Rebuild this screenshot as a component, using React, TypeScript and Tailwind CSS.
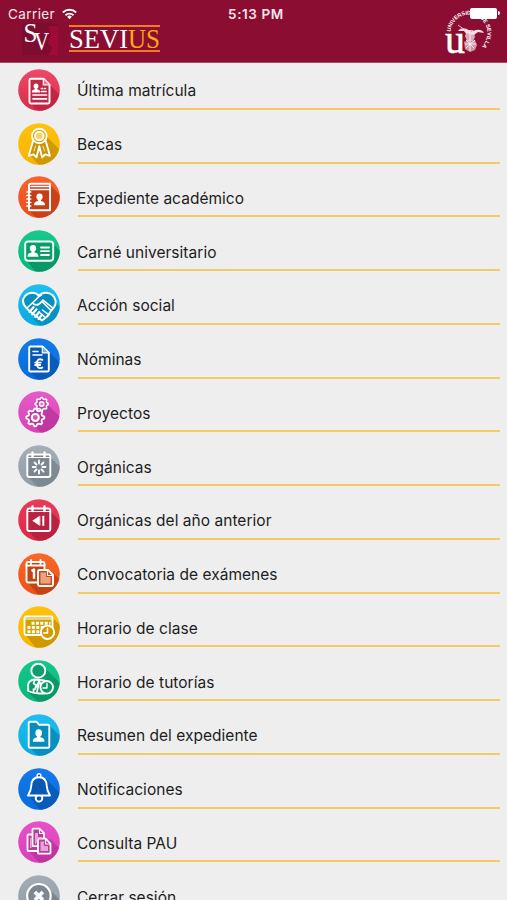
import React from 'react';

type Glyph = { from: string; to: string; shade: string; fold: string; art: React.ReactNode };

const gear = (cx: number, cy: number, r: number, depth: number): string => {
  const pts: string[] = [];
  for (let i = 0; i < 32; i++) {
    const a = ((i - 0.5) / 32) * Math.PI * 2;
    const q = i % 4 < 2 ? r : r - depth;
    pts.push(`${(cx + q * Math.cos(a)).toFixed(2)},${(cy + q * Math.sin(a)).toFixed(2)}`);
  }
  return pts.join(' ');
};

const Person = ({ x, y, s = 1 }: { x: number; y: number; s?: number }) => (
  <g transform={`translate(${x} ${y}) scale(${s})`} fill="#fff" stroke="none">
    <ellipse cx="0" cy="-3" rx="3.2" ry="3.5" />
    <path d="M-1.500-1h3v2.300c2.500.6 4.100 1.300 4.100 4.200h-11.200c0-2.900 1.600-3.600 4.100-4.200z" />
  </g>
);

const Calendar = ({ dark }: { dark: string }) => (
  <>
    <rect x="9.300" y="9.500" width="23" height="22.500" rx="2" fill={dark} />
    <path d="M14.500 7.500v4.500M26.500 7.500v4.500" strokeWidth="2.400" />
    <path d="M9.500 12.500h22.500" strokeWidth="1" />
  </>
);

const glyphs: Record<string, Glyph> = {
  enrol: {
    from: '#ef4967', to: '#d82c4d', fold: '#b92140', shade: 'M32 16 50 34V50H28L12 34z',
    art: (
      <>
        <path d="M13 9.700h12.500l6 6V33q0 1.500-1.500 1.500H13q-1.500 0-1.500-1.500V11.200q0-1.500 1.500-1.500z" fill="#c32746" />
        <path d="M25.300 10v6h6" fill="#f57b91" strokeWidth="1.200" />
        <Person x={18} y={19.300} s={0.75} />
        <path d="M23.500 19.500h1.200M26.700 19.500h.8M23.500 22.500h4.500M15 26h13.500M15 29.800h13.500" strokeWidth="1.700" />
      </>
    ),
  },
  award: {
    from: '#ffc20e', to: '#f6b400', fold: '#c58d00', shade: 'M28 13 50 35V50H28L12 32z',
    art: (
      <>
        <path d="m15 18-4.300 14.800 4.800-1.500 3 3 2.800-11 2.800 11 3-3 4.800 1.500L27.700 18" fill="#c99400" />
        <circle cx="21.300" cy="13" r="7.300" fill="#d9a000" strokeWidth="1.900" />
        <circle cx="21.300" cy="13" r="4.300" fill="#f7d265" strokeWidth="1.900" />
        <path d="m17.500 23-1.500 5M25 23l1.500 5" strokeWidth=".8" />
      </>
    ),
  },
  record: {
    from: '#f8632e', to: '#ed4c1d', fold: '#bd3b16', shade: 'M32 9 50 27V50H28L10 34z',
    art: (
      <>
        <path d="M13 7.800h19v26.500H11V9.800q0-2 2-2z" fill="#c43e18" />
        <path d="M11 13.500h21M13 10.600h19" strokeWidth="1.500" />
        <path d="M8.800 16h4M8.800 19.500h4M8.800 23h4M8.800 26.500h4M8.800 30h4" strokeWidth="1.500" />
        <Person x={21.500} y={23.800} s={0.98} />
      </>
    ),
  },
  card: {
    from: '#17c98c', to: '#06b878', fold: '#088d60', shade: 'M34 13 50 29V50H25L8 30z',
    art: (
      <>
        <rect x="7.200" y="11.500" width="28" height="19.300" rx="3" fill="#099d6b" />
        <Person x={15} y={21.300} s={0.98} />
        <path d="M23 17.500h8M23 21.200h8M23 25h8" strokeWidth="1.800" />
      </>
    ),
  },
  hands: {
    from: '#21bdf1', to: '#08acdf', fold: '#0789b8', shade: 'M36 17 50 31V50H30L15 35z',
    art: (
      <>
        <path d="M21 12C18 8 11 7.500 7 12c-3.500 4.200-1.700 8.500 1 11.500l4 4 12 9 3.200-2.500 3-2.500 2-3.500 3.600-4.300c3.200-4 2.200-9.300-1.200-12.500C30.500 7.700 24 8 21 12z" fill="#078fbe" />
        <path d="m9 24 9-8.500q3-3.500 5.300-4.500M15.500 20q4.500 2.500 8.500-2.500l9 9M20 21l5-4.800 10 8" strokeWidth="1.700" />
        <path d="m11.500 28 4-4.800M14.300 30.300l4.200-5M17.300 33l4-5M20.500 35l3.500-4.200" strokeWidth="2.200" />
        <path d="m24.500 26 6 4.700M22.500 29.300l4.700 4.200" strokeWidth="1.500" />
      </>
    ),
  },
  payroll: {
    from: '#117bea', to: '#066bdb', fold: '#0756af', shade: 'M31 14 50 33V50H28L11 33z',
    art: (
      <>
        <path d="M12.500 8.500h12l6.300 6.200v17.500q0 1.300-1.300 1.300h-17q-1.300 0-1.300-1.300V9.800q0-1.300 1.300-1.300z" fill="#0758b2" />
        <path d="M24.300 8.700v6.200h6" fill="#72adf0" strokeWidth="1.200" />
        <path d="M15 13.500h5M15 17h9" strokeWidth="1.600" />
        <path d="M24.300 21.800c-3.800-1.500-5.500.4-5.500 3.900s1.800 5.300 5.500 3.900M17.200 24.600h5.500M17.200 27h5" strokeWidth="1.900" />
      </>
    ),
  },
  gears: {
    from: '#e65bc7', to: '#d744b6', fold: '#b83299', shade: 'M29 13 50 34V50H32L11 31z',
    art: (
      <>
        <polygon points={gear(23.700, 13, 6.500, 1.300)} fill="#c13ba3" strokeWidth="1.500" />
        <circle cx="23.700" cy="13" r="2.200" fill="#e86fcd" strokeWidth="1.500" />
        <polygon points={gear(17.300, 26.500, 9, 2)} fill="#bc369d" strokeWidth="1.800" />
        <circle cx="17.300" cy="26.500" r="3.500" fill="#d954bb" strokeWidth="2.100" />
      </>
    ),
  },
  calendar: {
    from: '#a4afb8', to: '#919ca5', fold: '#75818a', shade: 'M32 12 50 30V50H28L10 32z',
    art: (
      <>
        <Calendar dark="#7b8790" />
        <path d="M21 15.500v3M21 25.500v3M14.700 22h3M24.500 22h3M16.500 17.500l2 2M25.500 17.500l-2 2M16.500 26.500l2-2M25.500 26.500l-2-2" strokeWidth="1.800" />
      </>
    ),
  },
  previous: {
    from: '#e93b5a', to: '#dc2849', fold: '#af1e3c', shade: 'M32 12 50 30V50H28L10 32z',
    art: (
      <>
        <Calendar dark="#b92341" />
        <path d="m14.300 21.800 7-4.800v9.600z" fill="#fff" stroke="none" />
        <path d="M21.800 17v9.600" strokeWidth="1" strokeLinecap="butt" />
        <path d="M25.300 16.800v10" strokeWidth="2" strokeLinecap="butt" />
      </>
    ),
  },
  exams: {
    from: '#f96827', to: '#ee5015', fold: '#ba3e13', shade: 'M33 18 50 35V50H27L11 31z',
    art: (
      <>
        <rect x="8.500" y="9" width="18" height="20.500" rx="1.500" fill="#c34412" />
        <path d="M13 6.800v4.500M22.500 6.800v4.500M8.500 12.500h18" strokeWidth="1.800" />
        <path d="m13.500 18 2.500-1.500v9.200" strokeWidth="2.400" strokeLinecap="butt" />
        <path d="M21.500 17h8.500l5 5v9.500q0 1.500-1.500 1.500h-12q-1.500 0-1.500-1.500v-13q0-1.500 1.500-1.500z" fill="#c84a18" />
        <path d="M22.500 19.500h5.500v4.500h4.500v6.500h-10z" fill="#eda27f" stroke="none" />
        <path d="M29.500 17.300v5.200h5" strokeWidth="1.200" />
      </>
    ),
  },
  schedule: {
    from: '#ffc10b', to: '#f8b500', fold: '#c48e00', shade: 'M35 12 50 27V50H24L7 28z',
    art: (
      <>
        <rect x="6.500" y="10.500" width="28" height="18.500" rx="1.500" fill="#d6a000" />
        <path d="M7 13h27" strokeWidth="1.200" />
        <path d="M13.500 17.200h19M9.500 21.500h18M9.500 25.700h14" strokeWidth="3" strokeDasharray="3 1.400" strokeLinecap="butt" />
        <circle cx="29.500" cy="26.300" r="6.700" fill="#d29a00" strokeWidth="1.900" />
        <path d="M29.500 22.200V27h-4" strokeWidth="1.500" />
      </>
    ),
  },
  tutor: {
    from: '#14c78a', to: '#09b97b', fold: '#098d62', shade: 'M27 8 50 31V50H28L10 32z',
    art: (
      <>
        <circle cx="20.300" cy="10.700" r="7" fill="#0b9d6b" />
        <path d="M16.500 19.500c-4 .8-6 2.500-6.300 5v6.500q4.500 2.300 11 2.500h5v-13z" fill="#0b9967" />
        <path d="m17 20-1.500 3.500 2.500 1.500-1 4.500 4-8.500 4 7M15.500 29v2.500M21 23l-2 9" strokeWidth="1.700" />
        <circle cx="28.700" cy="27.300" r="6.300" fill="#0b9c6b" strokeWidth="1.900" />
        <path d="M29 23.500V28h-4" strokeWidth="1.400" />
      </>
    ),
  },
  folder: {
    from: '#20bdf0', to: '#0bacdd', fold: '#0785b1', shade: 'M31 11 50 30V50H28L11 33z',
    art: (
      <>
        <path d="M12 7.700h6.500l2.500 3h9q1.300 0 1.300 1.300v20.500q0 1.300-1.300 1.300H12q-1.300 0-1.300-1.300V9q0-1.300 1.300-1.300z" fill="#078db9" />
        <Person x={20.700} y={22} s={1.04} />
      </>
    ),
  },
  bell: {
    from: '#1579e9', to: '#076bdd', fold: '#0755ae', shade: 'M28 11 50 33V50H28L12 29z',
    art: (
      <>
        <circle cx="21" cy="30.300" r="3.300" fill="#0758b2" />
        <circle cx="21" cy="7.700" r="1.900" fill="#0758b2" strokeWidth="1.400" />
        <path d="M21 9.300c-5.500 0-7.500 3.700-7.700 8.500-.2 4.500-.8 5.700-3.300 9.700h22c-2.500-4-3.100-5.200-3.300-9.700-.2-4.800-2.200-8.500-7.700-8.500z" fill="#0759b4" />
      </>
    ),
  },
  papers: {
    from: '#e651c9', to: '#d940b9', fold: '#b92f99', shade: 'M32 18 50 36V50H28L11 30z',
    art: (
      <>
        <g fill="#bd389f" strokeWidth="1.800">
          <path d="M10.500 13.500h7l3 3V30h-10q-1 0-1-1V14.500q0-1 1-1z" />
          <path d="M15.500 7.700h6l4.500 4.500v13H15.500q-1 0-1-1V8.700q0-1 1-1z" />
          <path d="M21 17.700h6.500l5 5v9q0 1-1 1H21q-1 0-1-1v-13q0-1 1-1z" />
        </g>
        <path d="M21.500 8v4.500H26M27.500 18v5h5" strokeWidth="1.100" />
        <path d="M17 12h3v4h4v1.500h-4L18 23h-1zM22.500 20.500H26V25h4v5h-7.500zM12 17h1.500v10H12z" fill="#e6a2d8" stroke="none" />
      </>
    ),
  },
  close: {
    from: '#a2adb6', to: '#8f9ba4', fold: '#717d86', shade: 'M30 13 50 33V50H30L12 30z',
    art: (
      <>
        <circle cx="20.900" cy="20.800" r="11.800" fill="#7d8992" strokeWidth="2.100" />
        <path d="m16.900 17 8 8M24.900 17l-8 8" strokeWidth="3.800" strokeLinecap="butt" />
      </>
    ),
  },
};

const Badge = ({ name }: { name: string }) => {
  const g = glyphs[name];
  return (
    <svg className="h-[42px] w-[42px] shrink-0" viewBox="0 0 42 42" aria-hidden="true">
      <defs>
        <clipPath id={`clip-${name}`}><circle cx="21" cy="21" r="20.800" /></clipPath>
        <linearGradient id={`tone-${name}`} x1="0" y1="0" x2="0" y2="1">
          <stop stopColor={g.from} /><stop offset="1" stopColor={g.to} />
        </linearGradient>
      </defs>
      <circle cx="21" cy="21" r="20.800" fill={`url(#tone-${name})`} />
      <path d={g.shade} fill={g.fold} opacity=".75" clipPath={`url(#clip-${name})`} />
      <g fill="none" stroke="#fff" strokeWidth="1.900" strokeLinecap="round" strokeLinejoin="round">{g.art}</g>
    </svg>
  );
};

const items: [string, string][] = [
  ['enrol', 'Última matrícula'],
  ['award', 'Becas'],
  ['record', 'Expediente académico'],
  ['card', 'Carné universitario'],
  ['hands', 'Acción social'],
  ['payroll', 'Nóminas'],
  ['gears', 'Proyectos'],
  ['calendar', 'Orgánicas'],
  ['previous', 'Orgánicas del año anterior'],
  ['exams', 'Convocatoria de exámenes'],
  ['schedule', 'Horario de clase'],
  ['tutor', 'Horario de tutorías'],
  ['folder', 'Resumen del expediente'],
  ['bell', 'Notificaciones'],
  ['papers', 'Consulta PAU'],
  ['close', 'Cerrar sesión'],
];

const SvMark = () => (
  <svg className="h-[32px] w-[36px] overflow-visible" viewBox="0 0 36 32">
    <path d="M0 0h36v32H0z" fill="#7d0d30" />
    <path d="M26 3h10v29h-9l3-8-4-4 3-8z" fill="#a00a39" />
    <g fill="#fff" fontFamily="Liberation Serif, serif">
      <text x="1.500" y="19" fontSize="27" textLength="14" lengthAdjust="spacingAndGlyphs">S</text>
      <text x="12" y="27" fontSize="26" textLength="15" lengthAdjust="spacingAndGlyphs">V</text>
    </g>
  </svg>
);

const Seal = () => (
  <svg className="h-[48px] w-[54px] overflow-visible" viewBox="0 0 54 48" fontFamily="Liberation Serif, serif">
    <defs><path id="seal-ring" d="M7.500 24.700a18.500 18.500 0 1 1 31 15" /></defs>
    <text fill="#fff" fontSize="5.500" fontWeight="700" fontFamily="Liberation Sans, sans-serif">
      <textPath href="#seal-ring" textLength="71">UNIVERSIDAD DE SEVILLA</textPath>
    </text>
    <text x="2" y="45.500" fill="#fff" stroke="#fff" strokeWidth=".5" fontSize="40" textLength="20" lengthAdjust="spacingAndGlyphs">u</text>
    <g fill="#f4dfe6">
      <path d="M15 24c3-4 8-3 11-.5l2 3h-5l-2-2.500zM41 26c-2-4-7-4-11-2l-4 3 5 1 4-3z" />
      <path d="M24 23h6l2 7-2 4h-6l-2-5z" opacity=".75" />
      <path d="m21 35 4-2 3 1 4-1 2 5-2 5-5 2-5-3z" opacity=".65" />
    </g>
    <path d="M23 33l8 8M32 33l-9 8M22 37h11M27 23v21" stroke="#fff" strokeWidth=".8" />
    <path d="m15 18 7 5" stroke="#e6bdca" strokeWidth="1" />
  </svg>
);

export default function App() {
  return (
    <div className="h-[900px] w-full overflow-hidden bg-[#eeeeee] font-['Inter','Liberation_Sans',sans-serif]">
      <header className="relative h-[63px] border-b border-[#a94a67] bg-[#8b0e32]">
        <div className="flex h-full items-start justify-between">
          <div className="flex items-start pt-[23px] pl-[22px]">
            <SvMark />
            <div className="mt-[2px] ml-[11px] flex h-[27px] w-[91px] items-center border-y-2 border-[#ea7d25]">
              <svg className="h-[23px] w-[91px] overflow-visible" viewBox="0 0 91 23" fontFamily="Liberation Serif, serif" fontSize="27">
                <text x="0" y="20.500" fill="#fff" textLength="59" lengthAdjust="spacingAndGlyphs">SEVI</text>
                <text x="59" y="20.500" fill="#f9ac0c" textLength="32" lengthAdjust="spacingAndGlyphs">US</text>
              </svg>
            </div>
          </div>
          <div className="pt-[7px] pr-[10px]"><Seal /></div>
        </div>
        <div className="absolute inset-x-0 top-0 grid h-7 grid-cols-3 items-center text-[13.5px] text-[#f7e7ed]">
          <div className="flex items-center gap-[7px] pl-2">
            <span className="tracking-[0.4px]">Carrier</span>
            <svg className="h-[12px] w-[15px]" viewBox="0 0 16 12" fill="none" stroke="#fff" strokeWidth="2">
              <path d="M.9 4.400a10.200 10.200 0 0 1 14.200 0M3.700 7.300a6.200 6.200 0 0 1 8.600 0" />
              <path d="m8 11.500-2.500-2.700a3.600 3.600 0 0 1 5 0z" fill="#fff" stroke="none" />
            </svg>
          </div>
          <span className="pl-[5px] text-center font-semibold tracking-[0.6px]">5:13 PM</span>
          <div className="flex items-center justify-end pr-[7px] pb-[2px]">
            <span className="h-[11px] w-[27px] rounded-[2px] bg-white" />
            <span className="ml-px h-1 w-[2px] rounded-r bg-white" />
          </div>
        </div>
      </header>
      <ul>
        {items.map(([name, label]) => (
          <li key={name} className="flex h-[53.75px] items-center pr-[7px] pl-[18px]">
            <Badge name={name} />
            <div className="ml-[18px] flex h-10 flex-1 items-center border-b-2 border-[#f3cb66] pt-1 text-[15.5px] tracking-[0.03px] text-[#1d1d1d]">
              <span className="-ml-px">{label}</span>
            </div>
          </li>
        ))}
      </ul>
    </div>
  );
}
